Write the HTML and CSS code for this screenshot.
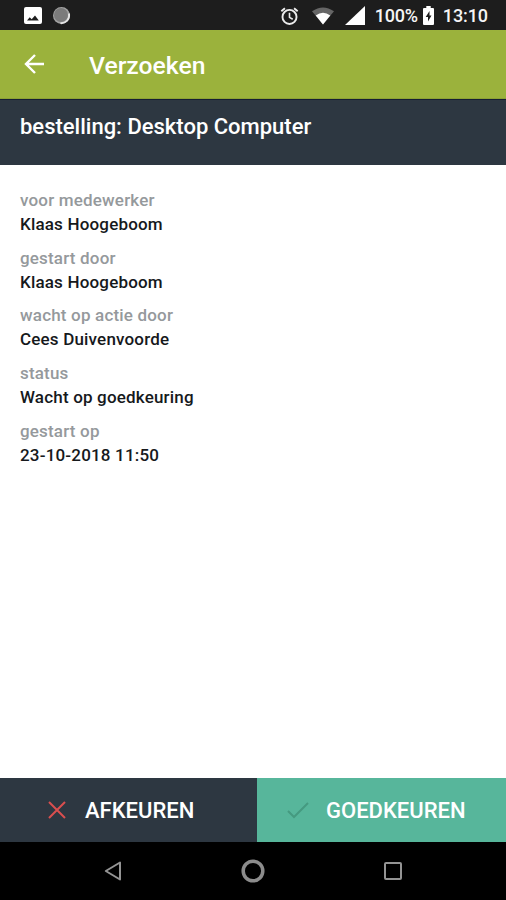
FILE: index.html
```html
<!DOCTYPE html>
<html lang="nl">

<head>
  <meta charset="UTF-8">
  <meta name="viewport" content="width=device-width, initial-scale=1.0">
  <title>Verzoeken</title>
  <link rel="stylesheet" href="styles.css">
</head>

<body>
  <div class="screen">
    <div class="status-bar">
      <svg class="icon-picture" width="18" height="18" viewBox="0 0 18 18">
        <rect width="18" height="17" rx="2" fill="#fff" />
        <path d="M3 13.500l2.700-3.200 2 1.900 3.300-3.600 3.800 4.900z" fill="#1d1d1d" />
      </svg>
      <svg class="icon-circle" width="19" height="19" viewBox="0 0 19 19">
        <circle cx="9.500" cy="9.500" r="8.500" fill="#a2a2a2" />
        <circle cx="9" cy="9" r="7" fill="#7b7b7b" />
        <path d="M17 7.500A8 8 0 0 1 8.500 17.200" fill="none" stroke="#e6e6e6" stroke-width="1.800" />
      </svg>
      <span class="spacer"></span>
      <svg class="icon-alarm" width="19" height="20" viewBox="0 0 20 20" fill="none" stroke="#ececec" stroke-width="2">
        <circle cx="10" cy="11" r="7.400" />
        <path d="M1.400 5L5.200 1.800M18.600 5L14.800 1.800" />
        <path d="M10 6.500v4.900l3.400 2" stroke-width="1.700" />
      </svg>
      <svg class="icon-wifi" width="22" height="18" viewBox="0 0 22 18">
        <path d="M0 4.200Q11-3.400 22 4.200L11 17.500z" fill="#666" />
        <path d="M3.700 8.400Q11 3.200 18.300 8.400L11 17.500z" fill="#fff" />
      </svg>
      <svg class="icon-signal" width="20" height="19" viewBox="0 0 20 19">
        <path d="M20 0v19H0z" fill="#fff" />
      </svg>
      <span class="battery-level">100%</span>
      <svg class="icon-battery" width="11" height="19" viewBox="0 0 11 19">
        <path d="M3.300 0h4.400v2H10q1 0 1 1v15q0 1-1 1H1q-1 0-1-1V3q0-1 1-1h2.300z" fill="#fff" />
        <path d="M6.500 5L2.700 11h2.300v4.500l3.500-6H6.500z" fill="#1d1d1d" />
      </svg>
      <span class="clock">13:10</span>
    </div>

    <header class="app-bar">
      <svg class="icon-back" width="20" height="20" viewBox="0 0 20 20" fill="none" stroke="#fff" stroke-width="2.400">
        <path d="M20 10H2M11 1L2 10l9 9" />
      </svg>
      <h1>Verzoeken</h1>
    </header>

    <div class="request-title">
      <h2>bestelling: Desktop Computer</h2>
    </div>

    <dl class="details">
      <dt>voor medewerker</dt>
      <dd>Klaas Hoogeboom</dd>
      <dt>gestart door</dt>
      <dd>Klaas Hoogeboom</dd>
      <dt>wacht op actie door</dt>
      <dd>Cees Duivenvoorde</dd>
      <dt>status</dt>
      <dd>Wacht op goedkeuring</dd>
      <dt>gestart op</dt>
      <dd>23-10-2018 11:50</dd>
    </dl>

    <div class="actions">
      <button class="reject">
        <svg width="18" height="18" viewBox="0 0 18 18" fill="none" stroke="#d94f4f" stroke-width="2">
          <path d="M1 1l16 16M17 1L1 17" />
        </svg>
        <span>AFKEUREN</span>
      </button>
      <button class="approve">
        <svg width="22" height="18" viewBox="0 0 22 18" fill="none" stroke="#459a80" stroke-width="2">
          <path d="M1 10l6 6L21 2" />
        </svg>
        <span>GOEDKEUREN</span>
      </button>
    </div>

    <nav class="nav-bar">
      <svg width="18" height="20" viewBox="0 0 18 20" fill="none" stroke="#949494" stroke-width="2">
        <path d="M16 1.500v17L1.800 10z" stroke-linejoin="round" />
      </svg>
      <svg width="24" height="24" viewBox="0 0 24 24" fill="none" stroke="#8c8c8c" stroke-width="3.500">
        <circle cx="12" cy="12" r="9.800" />
      </svg>
      <svg width="18" height="18" viewBox="0 0 18 18" fill="none" stroke="#949494" stroke-width="2">
        <rect x="1" y="1" width="16" height="16" rx="1" />
      </svg>
    </nav>
  </div>
</body>

</html>
```
FILE: styles.css
```css
body {
  margin: 0;
  font-family: Roboto, "Liberation Sans", sans-serif;
  background-color: #fff;
}

h1,
h2,
dl,
dd {
  margin: 0;
}

svg {
  display: block;
  flex: none;
}

.screen {
  display: flex;
  flex-direction: column;
  height: 900px;
  overflow: hidden;
}

.status-bar {
  display: flex;
  align-items: center;
  box-sizing: border-box;
  height: 30px;
  padding: 1px 18px 0 24px;
  background-color: #1d1d1d;
  color: #f5f5f5;
  font-size: 18px;
  font-weight: 500;
}

.icon-circle {
  margin-left: 10px;
}

.spacer {
  flex: 1;
}

.icon-wifi {
  margin-left: 13px;
}

.icon-signal {
  margin-left: 11px;
}

.battery-level {
  margin-left: 10px;
  letter-spacing: -0.2px;
}

.icon-battery {
  margin-left: 5px;
}

.clock {
  margin-left: 9px;
  letter-spacing: -0.1px;
}

.app-bar {
  display: flex;
  align-items: center;
  box-sizing: border-box;
  height: 69px;
  padding: 0 24px;
  background-color: #9bb23c;
  border-bottom: 1px solid #8ca135;
}

.app-bar h1 {
  margin-left: 45px;
  padding-top: 3px;
  color: #fff;
  font-size: 24.7px;
  font-weight: 500;
}

.request-title {
  box-sizing: border-box;
  height: 66px;
  padding: 13px 20px 0;
  background-color: #2d3741;
  border-top: 1px solid #151d33;
}

.request-title h2 {
  color: #fff;
  font-size: 22px;
  font-weight: 500;
  line-height: 28px;
}

.details {
  flex: 1;
  padding: 23px 20px 0;
  font-size: 17px;
  font-weight: 500;
  letter-spacing: 0.18px;
}

.details dt {
  height: 24px;
  line-height: 24px;
  color: #95999c;
}

.details dd {
  height: 24px;
  margin-bottom: 9.7px;
  line-height: 24px;
  color: #16191c;
}

.actions {
  display: flex;
  height: 64px;
}

.actions button {
  display: flex;
  align-items: center;
  padding: 0;
  border: none;
  color: #fff;
  font-family: inherit;
  font-size: 22px;
  font-weight: 500;
}

.actions .reject {
  width: 257px;
  padding-left: 48px;
  gap: 19px;
  background-color: #2d3741;
}

.actions .approve {
  flex: 1;
  padding-left: 30px;
  gap: 17px;
  background-color: #57b69b;
}

.nav-bar {
  display: flex;
  justify-content: space-between;
  align-items: center;
  box-sizing: border-box;
  height: 58px;
  padding: 0 104px;
  background-color: #000;
}
```
